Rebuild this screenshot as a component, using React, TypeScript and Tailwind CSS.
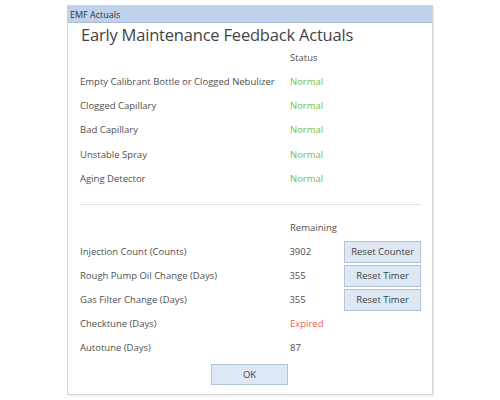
const statusRows = [
  "Empty Calibrant Bottle or Clogged Nebulizer",
  "Clogged Capillary",
  "Bad Capillary",
  "Unstable Spray",
  "Aging Detector",
];

interface Counter {
  label: string;
  value: string;
  expired?: boolean;
  button?: string;
}

const counters: Counter[] = [
  { label: "Injection Count (Counts)", value: "3902", button: "Reset Counter" },
  { label: "Rough Pump Oil Change (Days)", value: "355", button: "Reset Timer" },
  { label: "Gas Filter Change (Days)", value: "355", button: "Reset Timer" },
  { label: "Checktune (Days)", value: "Expired", expired: true },
  { label: "Autotune (Days)", value: "87" },
];

function Row(props: { label: string; children?: React.ReactNode; extra?: React.ReactNode }) {
  return (
    <div className="flex items-center h-[24px]">
      <div className="w-[210px] text-[#505050]">{props.label}</div>
      <div className="w-[55px]">{props.children}</div>
      {props.extra}
    </div>
  );
}

export default function App() {
  return (
    <div className="w-[500px] h-[400px] bg-white pt-[5px] pl-[67px]" style={{ fontFamily: '"Open Sans", "Noto Sans", sans-serif' }}>
      <div className="w-[366px] h-[390px] border border-[#d2d2d2] flex flex-col shadow-[1px_1px_2px_rgba(0,0,0,0.08)]">
        <div className="h-[17px] bg-[#bed2ec] border-b border-[#a9bdd8] text-[9px] text-[#333] pl-[2px] leading-[17px]">EMF Actuals</div>
        <div className="pl-[12px] pr-[11px] text-[9.5px] flex flex-col">
          <h1 className="text-[16.5px] tracking-[-0.2px] text-[#444] h-[23px] leading-[24px] pl-[1px]">Early Maintenance Feedback Actuals</h1>
          <Row label="">
            <span className="text-[#505050]">Status</span>
          </Row>
          <div className="flex flex-col gap-[0.3px]">
            {statusRows.map((s) => (
              <Row key={s} label={s}>
                <span className="text-[#78c043]">Normal</span>
              </Row>
            ))}
          </div>
          <div className="mt-[13px] border-t border-[#e3e3e3]" />
          <div className="mt-[11px]">
            <Row label="">
              <span className="text-[#505050]">Remaining</span>
            </Row>
          </div>
          {counters.map((c) => (
            <Row
              key={c.label}
              label={c.label}
              extra={
                c.button ? (
                  <button className="w-[77px] h-[22px] bg-[#dde8f4] border border-[#b3c4d8] text-[#444]">{c.button}</button>
                ) : null
              }
            >
              <span className={c.expired ? "text-[#f0604c]" : "text-[#505050]"}>{c.value}</span>
            </Row>
          ))}
          <div className="flex justify-center mt-[4px] pr-[2px]">
            <button className="w-[77px] h-[21px] bg-[#dde8f4] border border-[#b3c4d8] text-[#444]">OK</button>
          </div>
        </div>
      </div>
    </div>
  );
}
